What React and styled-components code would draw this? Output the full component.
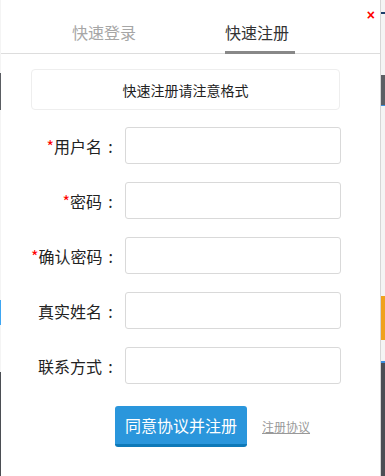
import React from 'react'
import styled, { createGlobalStyle } from 'styled-components'

const GlobalStyle = createGlobalStyle`
  html, body {
    margin: 0;
    padding: 0;
    background: #f2f2f2;
    font-family: "Noto Sans CJK SC", "Microsoft YaHei", sans-serif;
  }
`

const Page = styled.div`
  display: flex;
  width: 385px;
  height: 476px;
  overflow: hidden;
`

// strips of the page that peeks out behind the dialog
const Strip = styled.div`
  width: ${p => p.w}px;
  display: flex;
  flex-direction: column;
  background: #f4f4f4;
`

const Band = styled.div`
  height: ${p => p.h}px;
  background: ${p => p.c || 'transparent'};
  flex-shrink: 0;
`

const Dialog = styled.div`
  position: relative;
  width: 379px;
  height: 476px;
  background: #fff;
  border-right: 1px solid #d6d6d6;
  box-sizing: content-box;
`

const Close = styled.span`
  position: absolute;
  top: 8px;
  right: 5px;
  color: #f00;
  font-family: "Liberation Sans", sans-serif;
  font-size: 14px;
  font-weight: bold;
  line-height: 14px;
`

const TabBar = styled.div`
  display: flex;
  gap: 83px;
  padding-left: 71px;
  height: 53px;
  border-bottom: 1px solid #ddd;
`

const Tab = styled.div`
  width: 70px;
  height: 54px;
  box-sizing: border-box;
  padding-top: 20px;
  font-size: 16px;
  line-height: 24px;
  color: ${p => (p.active ? '#333' : '#a6a6a6')};
  border-bottom: 3px solid ${p => (p.active ? '#888' : 'transparent')};
`

const Body = styled.div`
  padding: 15px 40px 0 30px;
`

const Notice = styled.div`
  height: 41px;
  box-sizing: border-box;
  border: 1px solid #eee;
  border-radius: 4px;
  display: flex;
  align-items: center;
  justify-content: center;
  font-size: 14px;
  color: #222;
`

const Form = styled.div`
  display: grid;
  grid-template-columns: 88px 216px;
  column-gap: 6px;
  row-gap: 18px;
  margin-top: 17px;
`

const Label = styled.label`
  display: flex;
  align-items: center;
  justify-content: flex-end;
  font-size: 16px;
  color: #222;
  white-space: nowrap;
`

const Star = styled.span`
  color: #f00;
`

const Colon = styled.span`
  display: inline-block;
  width: 17px;
  text-align: center;
`

const Input = styled.input`
  height: 37px;
  box-sizing: border-box;
  border: 1px solid #d9d9d9;
  border-radius: 3px;
  padding: 0 8px;
  outline: none;
`

const Actions = styled.div`
  display: flex;
  align-items: center;
  gap: 15px;
  margin-top: 22px;
  padding-left: 84px;
`

const Submit = styled.button`
  width: 132px;
  height: 41px;
  border: none;
  border-bottom: 3px solid #0e79b8;
  border-radius: 3px;
  background: #2a96dc;
  color: #fff;
  font-family: inherit;
  font-size: 16px;
  padding: 0;
`

const AgreeLink = styled.a`
  font-size: 12px;
  color: #999;
  text-decoration: underline;
`

const fields = [
  { label: '用户名', required: true },
  { label: '密码', required: true, type: 'password' },
  { label: '确认密码', required: true, type: 'password' },
  { label: '真实姓名' },
  { label: '联系方式' },
]

export default function App() {
  return (
    <Page>
      <GlobalStyle />
      <Strip w={1}>
        <Band h={73} />
        <Band h={37} c="#5a5d62" />
        <Band h={190} />
        <Band h={25} c="#3ea6f2" />
        <Band h={47} />
        <Band h={104} c="#4b4e54" />
      </Strip>
      <Dialog>
        <Close>×</Close>
        <TabBar>
          <Tab>快速登录</Tab>
          <Tab active>快速注册</Tab>
        </TabBar>
        <Body>
          <Notice>快速注册请注意格式</Notice>
          <Form>
            {fields.map(f => (
              <React.Fragment key={f.label}>
                <Label>
                  {f.required && <Star>*</Star>}
                  {f.label}
                  <Colon>:</Colon>
                </Label>
                <Input type={f.type || 'text'} />
              </React.Fragment>
            ))}
          </Form>
          <Actions>
            <Submit>同意协议并注册</Submit>
            <AgreeLink>注册协议</AgreeLink>
          </Actions>
        </Body>
      </Dialog>
      <Strip w={4}>
        <Band h={12} />
        <Band h={2} c="#1d3f6b" />
        <Band h={61} />
        <Band h={30} c="#5c5f64" />
        <Band h={1} c="#3b8fe0" />
        <Band h={190} />
        <Band h={44} c="#f0a21e" />
        <Band h={21} />
        <Band h={2} c="#3b8fe0" />
        <Band h={113} c="#4b4e54" />
      </Strip>
    </Page>
  )
}
